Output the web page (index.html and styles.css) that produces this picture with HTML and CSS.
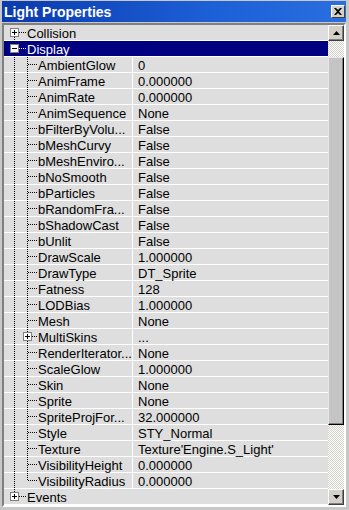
FILE: index.html
```html
<!doctype html>
<html>
<head>
<meta charset="utf-8">
<link rel="stylesheet" href="styles.css">
</head>
<body>
<div class="window">
	<div class="titlebar">
		<span class="title">Light Properties</span>
		<span class="close"><svg width="8" height="7" viewBox="0 0 8 7"><path d="M0 0h2l2 2 2-2h2L5 3.5 8 7H6L4 5 2 7H0l3-3.5z" fill="#000"/></svg></span>
	</div>
	<div class="panel">
		<div class="list">
			<div class="row cat top"><span class="tree"><span class="box plus"></span></span><span class="cat-label">Collision</span></div>
			<div class="row cat sel"><span class="tree"><span class="box minus"></span></span><span class="cat-label">Display</span></div>
			<div class="row"><span class="tree sub"></span><span class="name">AmbientGlow</span><span class="value">0</span></div>
			<div class="row"><span class="tree sub"></span><span class="name">AnimFrame</span><span class="value">0.000000</span></div>
			<div class="row"><span class="tree sub"></span><span class="name">AnimRate</span><span class="value">0.000000</span></div>
			<div class="row"><span class="tree sub"></span><span class="name">AnimSequence</span><span class="value">None</span></div>
			<div class="row"><span class="tree sub"></span><span class="name">bFilterByVolu...</span><span class="value">False</span></div>
			<div class="row"><span class="tree sub"></span><span class="name">bMeshCurvy</span><span class="value">False</span></div>
			<div class="row"><span class="tree sub"></span><span class="name">bMeshEnviro...</span><span class="value">False</span></div>
			<div class="row"><span class="tree sub"></span><span class="name">bNoSmooth</span><span class="value">False</span></div>
			<div class="row"><span class="tree sub"></span><span class="name">bParticles</span><span class="value">False</span></div>
			<div class="row"><span class="tree sub"></span><span class="name">bRandomFra...</span><span class="value">False</span></div>
			<div class="row"><span class="tree sub"></span><span class="name">bShadowCast</span><span class="value">False</span></div>
			<div class="row"><span class="tree sub"></span><span class="name">bUnlit</span><span class="value">False</span></div>
			<div class="row"><span class="tree sub"></span><span class="name">DrawScale</span><span class="value">1.000000</span></div>
			<div class="row"><span class="tree sub"></span><span class="name">DrawType</span><span class="value">DT_Sprite</span></div>
			<div class="row"><span class="tree sub"></span><span class="name">Fatness</span><span class="value">128</span></div>
			<div class="row"><span class="tree sub"></span><span class="name">LODBias</span><span class="value">1.000000</span></div>
			<div class="row"><span class="tree sub"></span><span class="name">Mesh</span><span class="value">None</span></div>
			<div class="row"><span class="tree sub"><span class="box plus sub-box"></span></span><span class="name">MultiSkins</span><span class="value">...</span></div>
			<div class="row"><span class="tree sub"></span><span class="name">RenderIterator...</span><span class="value">None</span></div>
			<div class="row"><span class="tree sub"></span><span class="name">ScaleGlow</span><span class="value">1.000000</span></div>
			<div class="row"><span class="tree sub"></span><span class="name">Skin</span><span class="value">None</span></div>
			<div class="row"><span class="tree sub"></span><span class="name">Sprite</span><span class="value">None</span></div>
			<div class="row"><span class="tree sub"></span><span class="name">SpriteProjFor...</span><span class="value">32.000000</span></div>
			<div class="row"><span class="tree sub"></span><span class="name">Style</span><span class="value">STY_Normal</span></div>
			<div class="row"><span class="tree sub"></span><span class="name">Texture</span><span class="value">Texture'Engine.S_Light'</span></div>
			<div class="row"><span class="tree sub"></span><span class="name">VisibilityHeight</span><span class="value">0.000000</span></div>
			<div class="row"><span class="tree sub last"></span><span class="name">VisibilityRadius</span><span class="value">0.000000</span></div>
			<div class="row cat end"><span class="tree"><span class="box plus"></span></span><span class="cat-label">Events</span></div>
		</div>
		<div class="scrollbar">
			<div class="sbtn"><svg width="7" height="4" viewBox="0 0 7 4"><path d="M3.5 0L7 4H0z" fill="#000"/></svg></div>
			<div class="track">
				<div class="thumb"></div>
			</div>
			<div class="sbtn"><svg width="7" height="4" viewBox="0 0 7 4"><path d="M0 0h7L3.5 4z" fill="#000"/></svg></div>
		</div>
	</div>
</div>
</body>
</html>
```

FILE: styles.css
```css
body{
	margin:0;
	background:#c8c8c8;
	font-family:"Liberation Sans", Arial, sans-serif;
}
.window{
	width:349px;
	height:510px;
	box-sizing:border-box;
	padding:1px 3px 3px 2px;
	background:#c8c8c8;
	display:flex;
	flex-direction:column;
}
.titlebar{
	height:21px;
	flex:none;
	display:flex;
	align-items:center;
	justify-content:space-between;
	padding:0 1px 0 2px;
	background:linear-gradient(to right, #0a3aae, #1d5fd6 60%, #2a6ee0);
}
.title{
	color:#fff;
	font-weight:bold;
	font-size:14px;
	line-height:21px;
	padding-top:2px;
}
.close{
	width:14px;
	height:13px;
	box-sizing:border-box;
	display:flex;
	align-items:center;
	justify-content:center;
	background:#d4d0c8;
	border:1px solid;
	border-color:#fff #404040 #404040 #fff;
}
.panel{
	margin-top:1px;
	flex:1;
	display:flex;
	border:2px solid;
	border-color:#808080 #fff #fff #808080;
	box-shadow:inset 1px 1px 0 #404040;
}
.list{
	flex:1;
	background:#dedede;
	font-size:13px;
	color:#000;
}
.row{
	height:16px;
	display:flex;
	align-items:stretch;
	box-sizing:border-box;
	border-bottom:1px solid #fff;
	line-height:17px;
	white-space:nowrap;
}
.tree{
	flex:none;
	width:23px;
	display:flex;
	align-items:center;
	background-image:
		repeating-linear-gradient(to bottom, #000 0 1px, transparent 1px 2px),
		repeating-linear-gradient(to right, #000 0 1px, transparent 1px 2px);
	background-size:1px 100%, 8px 1px;
	background-position:10px 0, 15px 7px;
	background-repeat:no-repeat;
}
.cat.top .tree{
	background-size:1px 50%, 8px 1px;
	background-position:10px 100%, 15px 7px;
}
.cat.end .tree{
	background-size:1px 8px, 8px 1px;
	background-position:10px 0, 15px 7px;
}
.cat.sel{
	background:#000080;
	color:#fff;
}
.cat.sel .tree{
	background-image:
		repeating-linear-gradient(to bottom, #000 0 1px, transparent 1px 2px),
		repeating-linear-gradient(to right, #fff 0 1px, transparent 1px 2px);
}
.tree.sub{
	width:34px;
	background-image:
		repeating-linear-gradient(to bottom, #000 0 1px, transparent 1px 2px),
		repeating-linear-gradient(to bottom, #000 0 1px, transparent 1px 2px),
		repeating-linear-gradient(to right, #000 0 1px, transparent 1px 2px);
	background-size:1px 100%, 1px 100%, 9px 1px;
	background-position:10px 0, 23px 0, 24px 7px;
}
.tree.sub.last{
	background-size:1px 100%, 1px 8px, 9px 1px;
}
.box{
	width:9px;
	height:9px;
	box-sizing:border-box;
	margin-left:6px;
	margin-top:-1px;
	border:1px solid #808080;
	background-color:#fff;
	background-repeat:no-repeat;
}
.box.plus{
	background-image:linear-gradient(#000,#000), linear-gradient(#000,#000);
	background-size:5px 1px, 1px 5px;
	background-position:1px 3px, 3px 1px;
}
.box.minus{
	background-image:linear-gradient(#000,#000);
	background-size:5px 1px;
	background-position:1px 3px;
}
.box.sub-box{
	margin-left:19px;
}
.name{
	width:94px;
	flex:none;
	border-right:1px solid #fff;
}
.value{
	flex:1;
	padding-left:5px;
}
.scrollbar{
	width:16px;
	flex:none;
	display:flex;
	flex-direction:column;
}
.sbtn{
	height:16px;
	box-sizing:border-box;
	flex:none;
	display:flex;
	align-items:center;
	justify-content:center;
	background:#d4d0c8;
	border:1px solid;
	border-color:#fff #404040 #404040 #fff;
	box-shadow:inset -1px -1px 0 #808080;
}
.track{
	flex:1;
	padding-top:16px;
	background-color:#fff;
	background-image:
		linear-gradient(45deg, #d4d0c8 25%, transparent 25%, transparent 75%, #d4d0c8 75%),
		linear-gradient(45deg, #d4d0c8 25%, transparent 25%, transparent 75%, #d4d0c8 75%);
	background-size:2px 2px;
	background-position:0 0, 1px 1px;
}
.thumb{
	height:368px;
	box-sizing:border-box;
	background:#c4c4c4;
	border:1px solid;
	border-color:#e8e8e8 #000 #000 #e8e8e8;
	box-shadow:inset -1px -1px 0 #808080;
}
```
